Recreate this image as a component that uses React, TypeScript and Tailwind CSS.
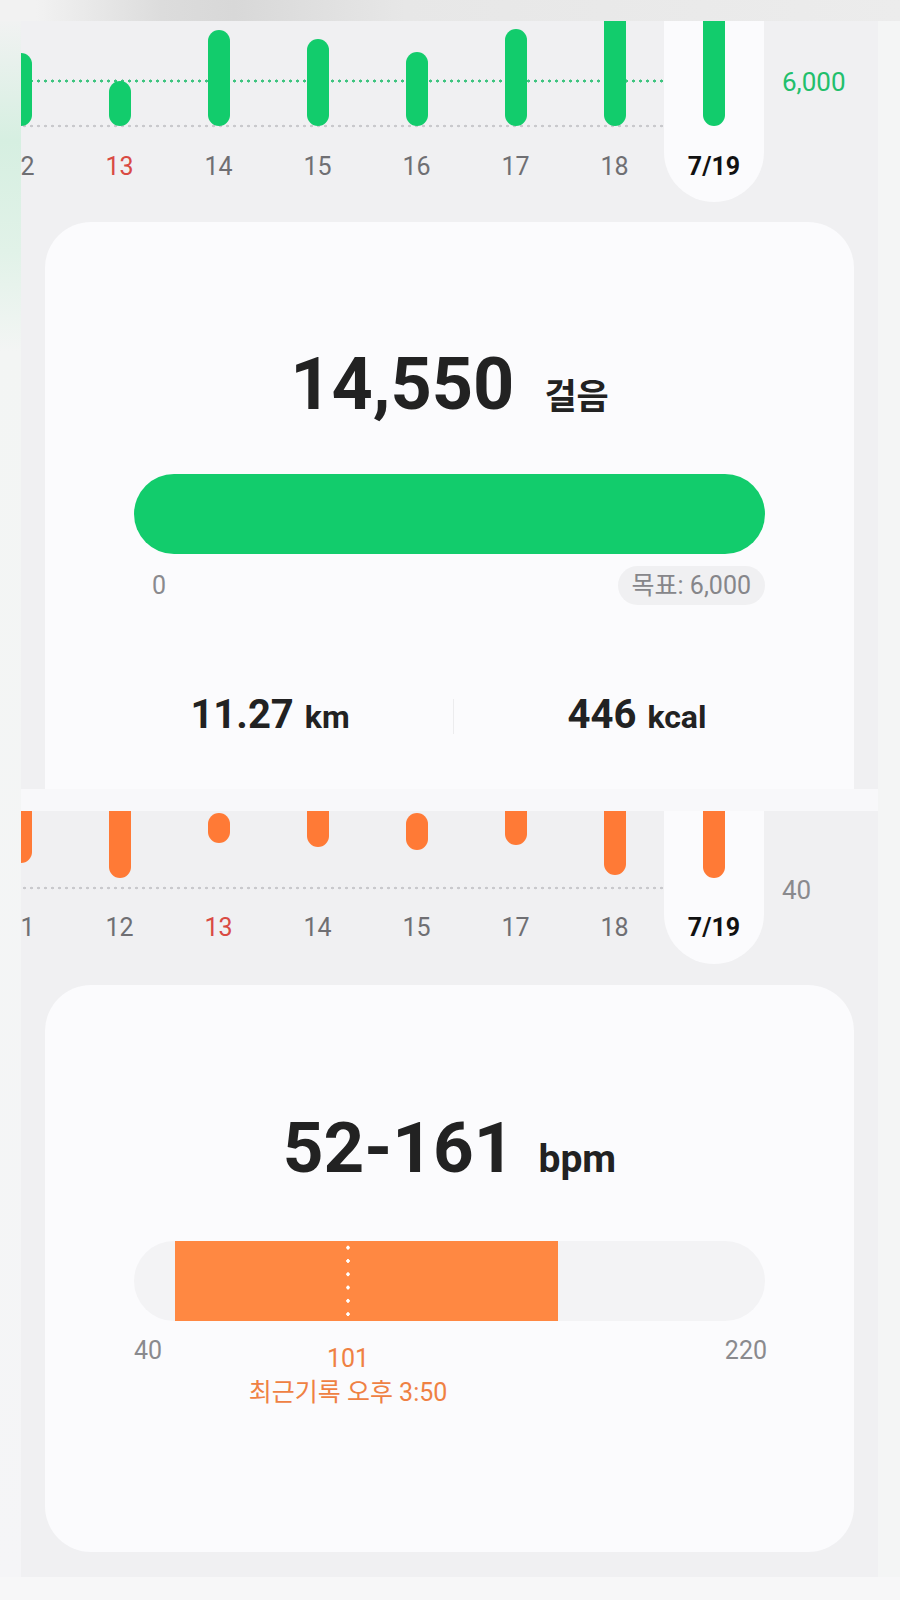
import React from 'react'

type Bar = { label: string; top: number; bottom: number; red?: boolean; active?: boolean }

const stepBars: Bar[] = [
  { label: '12', top: 32, bottom: 105 },
  { label: '13', top: 60, bottom: 105, red: true },
  { label: '14', top: 9, bottom: 105 },
  { label: '15', top: 18, bottom: 105 },
  { label: '16', top: 31, bottom: 105 },
  { label: '17', top: 8, bottom: 105 },
  { label: '18', top: -20, bottom: 105 },
  { label: '7/19', top: -20, bottom: 105, active: true },
]

const heartBars: Bar[] = [
  { label: '11', top: -20, bottom: 52 },
  { label: '12', top: -20, bottom: 67 },
  { label: '13', top: 2, bottom: 32, red: true },
  { label: '14', top: -20, bottom: 36 },
  { label: '15', top: 2, bottom: 39 },
  { label: '17', top: -20, bottom: 34 },
  { label: '18', top: -20, bottom: 64 },
  { label: '7/19', top: -20, bottom: 67, active: true },
]

function Column({ bar, color, area, gap, pb }: { bar: Bar; color: string; area: number; gap: number; pb: number }) {
  return (
    <div
      className={`flex flex-col items-center shrink-0 ${
        bar.active ? 'w-[100px] bg-[#fbfbfd] rounded-b-[50px]' : 'w-[99px]'
      }`}
      style={{ paddingBottom: pb }}
    >
      <div className="w-full overflow-hidden flex justify-center" style={{ height: area }}>
        <div
          className={`w-[22px] rounded-full shrink-0 ${color}`}
          style={{ marginTop: bar.top, height: bar.bottom - bar.top }}
        />
      </div>
      <div
        className={`text-[25px] leading-[30px] ${
          bar.active ? 'font-bold text-[#111111]' : bar.red ? 'text-[#d94a43]' : 'text-[#6f6f73]'
        }`}
        style={{ marginTop: gap }}
      >
        {bar.label}
      </div>
    </div>
  )
}

function StepChart() {
  return (
    <div className="relative h-[201px] overflow-hidden">
      <div className="absolute left-0 w-[680px] top-[58px] h-[4px] bg-[radial-gradient(circle,#3ec47f_1.3px,transparent_1.8px)] bg-[length:7px_4px]" />
      <div className="absolute left-0 w-[680px] top-[103px] h-[4px] bg-[radial-gradient(circle,#c9c9cc_1.1px,transparent_1.6px)] bg-[length:7px_4px]" />
      <div className="relative flex -ml-[50px]">
        {stepBars.map((b) => (
          <Column key={b.label} bar={b} color="bg-[#12cc6c]" area={105} gap={26} pb={20} />
        ))}
        <div className="ml-[18px] pt-[46px] text-[26px] leading-[30px] text-[#22bf6c]">6,000</div>
      </div>
    </div>
  )
}

function HeartChart() {
  return (
    <div className="relative h-[174px] overflow-hidden">
      <div className="absolute left-0 w-[680px] top-[75px] h-[4px] bg-[radial-gradient(circle,#c9c9cc_1.1px,transparent_1.6px)] bg-[length:7px_4px]" />
      <div className="relative flex -ml-[50px]">
        {heartBars.map((b) => (
          <Column key={b.label} bar={b} color="bg-[#ff7a36]" area={77} gap={25} pb={21} />
        ))}
        <div className="ml-[18px] pt-[64px] text-[26px] leading-[30px] text-[#8a8a8e]">40</div>
      </div>
    </div>
  )
}

function StepCard() {
  return (
    <div className="mx-[24px] h-[567px] bg-[#fbfbfd] rounded-t-[46px] pt-[127px]">
      <div className="flex items-baseline justify-center">
        <span className="text-[72px] leading-[72px] font-bold text-[#222222]">14,550</span>
        <span className="ml-[30px] text-[35px] font-bold text-[#222222]">걸음</span>
      </div>
      <div className="mx-[89px] mt-[49px]">
        <div className="h-[80px] rounded-full bg-[#12cc6c]" />
        <div className="mt-[12px] flex items-center justify-between">
          <span className="ml-[18px] text-[25px] leading-[39px] text-[#8a8a8e]">0</span>
          <span className="h-[39px] px-[14px] rounded-full bg-[#f0f0f2] text-[25px] leading-[39px] text-[#86868a]">
            목표: 6,000
          </span>
        </div>
      </div>
      <div className="mt-[88px] flex justify-center items-center pl-[8px]">
        <div className="w-[366px] flex justify-center items-baseline text-[#222222] font-bold">
          <span className="text-[40px] leading-[40px]">11.27</span>
          <span className="ml-[11px] text-[32px]">km</span>
        </div>
        <div className="w-px h-[35px] bg-[#ececee]" />
        <div className="w-[366px] flex justify-center items-baseline text-[#222222] font-bold">
          <span className="text-[40px] leading-[40px]">446</span>
          <span className="ml-[11px] text-[32px]">kcal</span>
        </div>
      </div>
    </div>
  )
}

function HeartCard() {
  return (
    <div className="mx-[24px] h-[567px] bg-[#fbfbfd] rounded-[46px] pt-[127px]">
      <div className="flex items-baseline justify-center">
        <span className="text-[71px] leading-[72px] font-bold text-[#222222]">52-161</span>
        <span className="ml-[24px] text-[39px] font-bold text-[#222222]">bpm</span>
      </div>
      <div className="mx-[89px] mt-[52px]">
        <div className="flex h-[80px] rounded-full bg-[#f3f3f5] overflow-hidden">
          <div className="relative ml-[41px] w-[383px] h-full bg-[#ff8842]">
            <div className="absolute left-[171px] top-0 w-[4px] h-full bg-[radial-gradient(circle,#ffffff_1.5px,transparent_2px)] bg-[length:4px_13.3px]" />
          </div>
        </div>
        <div className="relative mt-[15px] flex justify-between text-[25px] leading-[30px] text-[#8a8a8e]">
          <span>40</span>
          <span className="-mr-[2px]">220</span>
          <div className="absolute left-[214px] top-[8px] -translate-x-1/2 flex flex-col items-center whitespace-nowrap text-[#ef8143]">
            <span>101</span>
            <span className="mt-[4px]">최근기록 오후 3:50</span>
          </div>
        </div>
      </div>
    </div>
  )
}

export default function App() {
  return (
    <div className="w-[900px] h-[1600px] flex flex-col overflow-hidden bg-[#f6f6f8] font-[Roboto,'Noto_Sans_CJK_KR',sans-serif]">
      <div className="h-[21px] shrink-0 bg-[linear-gradient(90deg,#f2f2f2_4%,#dcdcdc_18%,#d8d8d8_26%,#e7e7e7_45%,#ececec_100%)]" />
      <div className="flex h-[1556px] shrink-0">
        <div className="w-[21px] shrink-0 bg-[linear-gradient(180deg,#f1f2f2_0px,#d6efe1_120px,#e1f2e8_230px,#f3f5f4_330px,#f5f5f7_100%)]" />
        <main className="w-[857px] shrink-0 flex flex-col bg-[#f0f0f2]">
          <StepChart />
          <StepCard />
          <div className="h-[22px] bg-[#f8f8fa]" />
          <HeartChart />
          <HeartCard />
        </main>
        <div className="flex-1 bg-[#f4f5f5]" />
      </div>
      <div className="flex-1 bg-[#f7f7f8]" />
    </div>
  )
}
